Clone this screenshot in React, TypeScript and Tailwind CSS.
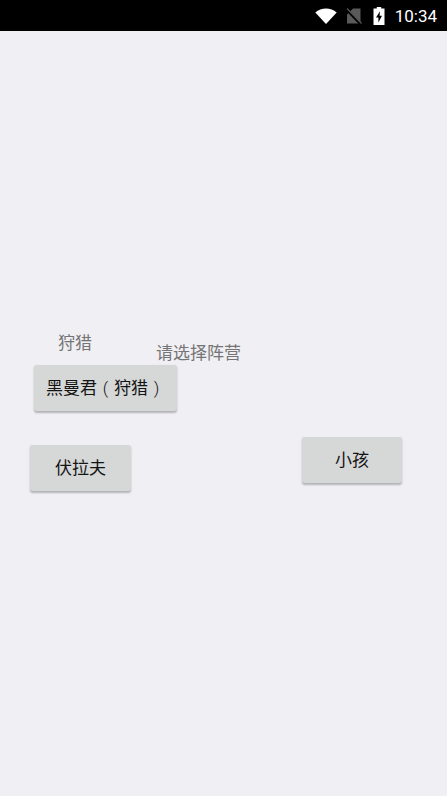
import type { ReactNode } from 'react';

const cjk = 'font-["Roboto","Noto_Sans_CJK_SC",sans-serif]';
const paren = 'inline-block w-[17px] text-center font-light';

function StatusBar() {
  return (
    <div className="flex h-[31px] items-center justify-end bg-black pr-[10px] pt-[1px] text-white">
      <svg width="22" height="16" viewBox="0 0 22 16" className="mr-[9px]">
        <path d="M0.3 4.5C3.3 2 7 0.6 11 0.6s7.7 1.4 10.7 3.9L11 16z" fill="#fff" />
      </svg>
      <svg width="16" height="16" viewBox="0 0 16 16" className="mr-[11px]">
        <path d="M1 15.5V6.5L7 0.5h7.5v15z" fill="#5a5a5a" />
        <path d="M0.5 1.5l14 14.5" stroke="#000" strokeWidth="2.6" />
        <path d="M1 0.5l14.5 15" stroke="#5a5a5a" strokeWidth="1.1" />
      </svg>
      <svg width="12" height="18" viewBox="0 0 12 18" className="mr-[10px]">
        <path
          d="M3.8 0h4.4v1.6h3.3V18H0.5V1.6h3.3zM7 4.2L3 10.4h2.4V15.4L9 8.8H6.6z"
          fill="#fff"
          fillRule="evenodd"
        />
      </svg>
      <span className={`${cjk} text-[17px] leading-none`}>10:34</span>
    </div>
  );
}

function RaisedButton({ children, className }: { children: ReactNode; className: string }) {
  return (
    <button
      className={`${cjk} ${className} h-[46px] rounded-[3px] bg-[#d6d7d7] pt-[1px] text-[17px] text-[#141414] shadow-[0_1.5px_2px_rgba(0,0,0,0.25)]`}
    >
      {children}
    </button>
  );
}

export default function App() {
  return (
    <div className={`${cjk} flex h-[796px] w-[447px] flex-col overflow-hidden bg-[#f0eff4]`}>
      <StatusBar />
      <main className="flex flex-col pt-[302px]">
        <div className="flex items-start text-[17px] leading-[20px] text-[#757575]">
          <span className="ml-[58px]">狩猎</span>
          <span className="ml-[64px] mt-[10px]">请选择阵营</span>
        </div>
        <RaisedButton className="ml-[34px] mt-[2px] w-[143px] whitespace-nowrap">
          黑曼君<span className={paren}>(</span>狩猎<span className={paren}>)</span>
        </RaisedButton>
        <div className="mt-[26px] flex items-start">
          <RaisedButton className="ml-[30px] mt-[8px] w-[101px]">伏拉夫</RaisedButton>
          <RaisedButton className="ml-[171px] w-[100px]">小孩</RaisedButton>
        </div>
      </main>
    </div>
  );
}
